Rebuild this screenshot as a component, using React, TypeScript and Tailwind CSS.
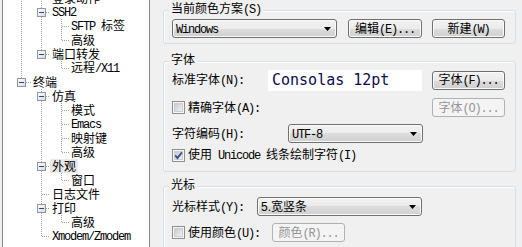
import React from 'react';

const latin = "font-['Liberation_Mono',monospace] text-[12px] tracking-[-1.2px]";
const btnFace = 'border border-[#707070] rounded-[3px] bg-[linear-gradient(#f2f2f2_0%,#ebebeb_50%,#dddddd_50%,#cfcfcf_100%)] shadow-[inset_0_0_0_1px_#fbfbfb]';

// SimSun-like text: latin runs in a narrow mono, the rest in the CJK face
function T({ s }: { s: string }) {
  const parts = s.match(/[\x20-\x7E]+|[^\x20-\x7E]+/g) || [];
  return (
    <span className="whitespace-pre">
      {parts.map((p, i) => (/^[\x20-\x7E]/.test(p) ? <span key={i} className={latin}>{p}</span> : <span key={i}>{p}</span>))}
    </span>
  );
}

type V = 'f' | 't' | 'b';
interface Row { t: string; lvl: 0 | 1 | 2; exp?: boolean; v: Record<number, V>; hl?: boolean; }

const rows: Row[] = [
  { t: '登录动作', lvl: 1, v: { 18: 'f', 38: 'f' } },
  { t: 'SSH2', lvl: 1, exp: true, v: { 18: 'f', 38: 'f', 58: 'b' } },
  { t: 'SFTP 标签', lvl: 2, v: { 18: 'f', 38: 'f', 58: 'f' } },
  { t: '高级', lvl: 2, v: { 18: 'f', 38: 'f', 58: 't' } },
  { t: '端口转发', lvl: 1, exp: true, v: { 18: 'f', 38: 't', 58: 'b' } },
  { t: '远程/X11', lvl: 2, v: { 18: 'f', 58: 't' } },
  { t: '终端', lvl: 0, exp: true, v: { 18: 't', 38: 'b' } },
  { t: '仿真', lvl: 1, exp: true, v: { 38: 'f', 58: 'b' } },
  { t: '模式', lvl: 2, v: { 38: 'f', 58: 'f' } },
  { t: 'Emacs', lvl: 2, v: { 38: 'f', 58: 'f' } },
  { t: '映射键', lvl: 2, v: { 38: 'f', 58: 'f' } },
  { t: '高级', lvl: 2, v: { 38: 'f', 58: 't' } },
  { t: '外观', lvl: 1, exp: true, hl: true, v: { 38: 'f', 58: 'b' } },
  { t: '窗口', lvl: 2, v: { 38: 'f', 58: 't' } },
  { t: '日志文件', lvl: 1, v: { 38: 'f' } },
  { t: '打印', lvl: 1, exp: true, v: { 38: 'f', 58: 'b' } },
  { t: '高级', lvl: 2, v: { 38: 'f', 58: 't' } },
  { t: 'Xmodem/Zmodem', lvl: 1, v: { 38: 't' } },
];

function TreeRow({ r }: { r: Row }) {
  const w = [28, 47, 66][r.lvl];
  const x = 18 + r.lvl * 20;
  return (
    <div className="flex h-[14px] items-center leading-[14px]">
      <svg width={w} height="14" className="shrink-0" shapeRendering="crispEdges">
        {Object.entries(r.v).map(([k, v]) => {
          const lx = Number(k) + 0.5;
          const [y1, y2] = v === 'f' ? [0, 14] : v === 't' ? [0, 7] : [7, 14];
          return <line key={k} x1={lx} x2={lx} y1={y1} y2={y2} stroke="#a0a0a0" strokeDasharray="1 1" />;
        })}
        <line x1={x + (r.exp ? 5 : 1)} x2={w} y1="7.5" y2="7.5" stroke="#a0a0a0" strokeDasharray="1 1" />
        {r.exp && (
          <g>
            <defs>
              <linearGradient id={`eg${x}`} x1="0" y1="0" x2="1" y2="1">
                <stop offset="0" stopColor="#ffffff" />
                <stop offset="1" stopColor="#d3d8e0" />
              </linearGradient>
            </defs>
            <rect x={x - 3.5} y="3.5" width="8" height="8" fill={`url(#eg${x})`} stroke="#8f97a3" />
            <line x1={x - 2} x2={x + 3} y1="7.5" y2="7.5" stroke="#2a4a86" />
          </g>
        )}
      </svg>
      <span className={`px-[2px] leading-[14px] ${r.hl ? 'bg-[#e9e9e9]' : ''}`}><T s={r.t} /></span>
    </div>
  );
}

function Arrow() {
  return <svg width="7" height="4" viewBox="0 0 7 4" className="shrink-0"><polygon points="0,0 7,0 3.5,4" fill="#000" /></svg>;
}

function Combo({ cls, children }: { cls: string; children: React.ReactNode }) {
  return (
    <div className={`flex h-[19px] items-center justify-between pl-[3px] pr-[5px] ${btnFace} ${cls}`}>
      <span className="leading-[17px]">{children}</span>
      <Arrow />
    </div>
  );
}

function Btn({ s, cls, off }: { s: string; cls: string; off?: boolean }) {
  return (
    <div
      className={`flex h-[19px] items-center justify-center rounded-[3px] border leading-[17px] ${cls} ${
        off ? 'border-[#adb2b5] bg-[#f4f4f4] text-[#959595]' : btnFace
      }`}
    >
      <T s={s} />
    </div>
  );
}

function Check({ on }: { on?: boolean }) {
  const id = on ? 'cb1' : 'cb0';
  return (
    <svg width="13" height="13" viewBox="0 0 13 13" className="shrink-0" shapeRendering="crispEdges">
      <defs>
        <linearGradient id={id} x1="0" y1="0" x2="1" y2="1">
          <stop offset="0" stopColor="#c4c8ce" />
          <stop offset="1" stopColor="#f3f3f3" />
        </linearGradient>
      </defs>
      <rect x="0.5" y="0.5" width="12" height="12" fill="#f6f6f6" stroke="#8e8f8f" />
      <rect x="2.5" y="2.5" width="8" height="8" fill={`url(#${id})`} stroke="#c9ccd1" />
      {on && <path d="M3.2 6.4 L5.4 9 L9.9 3.4" fill="none" stroke="#34508f" strokeWidth="1.8" shapeRendering="auto" />}
    </svg>
  );
}

function Group({ title, cls, children }: { title: string; cls: string; children: React.ReactNode }) {
  return (
    <div className={`relative w-[353px] rounded-[3px] border border-[#d5dfe5] shadow-[inset_1px_1px_0_#ffffff] ${cls}`}>
      <span className="absolute -top-[11px] left-[5px] bg-[#f0f0f0] px-[2px] leading-[16px]"><T s={title} /></span>
      {children}
    </div>
  );
}

export default function App() {
  return (
    <div className="flex h-[247px] w-[522px] overflow-hidden bg-[#f0f0f0] font-['Noto_Sans_CJK_SC',sans-serif] text-[12px] text-black">
      {/* tree */}
      <div className="ml-[2px] w-[148px] shrink-0 overflow-hidden border-x border-[#828790] bg-white">
        <div className="-mt-[9px]">
          {rows.map((r, i) => <TreeRow key={i} r={r} />)}
        </div>
      </div>

      {/* options */}
      <div className="flex-1 pl-[13px] pt-[10px]">
        <Group title="当前颜色方案(S)" cls="h-[34px] pl-[8px] pt-[8px]">
          <div className="flex h-[19px] items-center">
            <Combo cls="w-[165px]"><T s="Windows" /></Combo>
            <Btn s="编辑(E)..." cls="ml-[11px] w-[74px]" />
            <Btn s="新建(W)" cls="ml-[10px] w-[73px]" />
          </div>
        </Group>

        <Group title="字体" cls="mt-[17px] h-[111px] pl-[8px] pr-[10px] pt-[7px]">
          <div className="flex h-[22px] items-center">
            <span className="w-[96px]"><T s="标准字体(N):" /></span>
            <div className="flex h-[21px] w-[154px] items-center bg-white pl-[4px] font-['DejaVu_Sans_Mono',monospace] text-[15px] text-[#0c0c4e]">Consolas 12pt</div>
            <Btn s="字体(F)..." cls="ml-auto w-[73px]" />
          </div>
          <div className="mt-[7px] flex h-[19px] items-center">
            <Check />
            <span className="ml-[3px]"><T s="精确字体(A):" /></span>
            <Btn s="字体(O)..." cls="ml-auto w-[73px]" off />
          </div>
          <div className="mt-[7px] flex h-[19px] items-center">
            <span className="w-[116px]"><T s="字符编码(H):" /></span>
            <Combo cls="w-[135px]"><T s="UTF-8" /></Combo>
          </div>
          <div className="mt-[4px] flex h-[16px] items-center">
            <Check on />
            <span className="ml-[3px]"><T s="使用 Unicode 线条绘制字符(I)" /></span>
          </div>
        </Group>

        <Group title="光标" cls="mt-[14px] h-[80px] pl-[8px] pt-[10px]">
          <div className="flex h-[19px] items-center">
            <span className="w-[85px]"><T s="光标样式(Y):" /></span>
            <Combo cls="w-[165px]"><span className="font-['Liberation_Sans',sans-serif]">5.</span>宽竖条</Combo>
          </div>
          <div className="mt-[7px] flex h-[19px] items-center">
            <Check />
            <span className="ml-[3px]"><T s="使用颜色(U):" /></span>
            <Btn s="颜色(R)..." cls="ml-[12px] w-[73px]" off />
          </div>
        </Group>
      </div>
    </div>
  );
}
